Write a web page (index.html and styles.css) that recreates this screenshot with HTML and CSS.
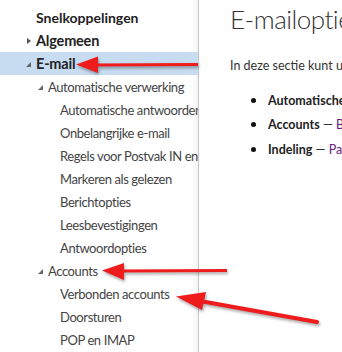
FILE: index.html
```html
<!DOCTYPE html>
<html lang="nl">
<head>
  <meta charset="UTF-8">
  <title>E-mailopties</title>
  <link rel="stylesheet" href="styles.css">
</head>
<body>
  <div class="page">
    <nav class="sidebar">
      <ul class="tree">
        <li class="item top plain">Snelkoppelingen</li>
        <li class="item top"><span class="tri tri-right"></span>Algemeen</li>
        <li class="item top selected"><span class="tri tri-open"></span>E-mail</li>
        <li class="item group"><span class="tri tri-open"></span>Automatische verwerking</li>
        <li class="item leaf">Automatische antwoorden</li>
        <li class="item leaf">Onbelangrijke e-mail</li>
        <li class="item leaf">Regels voor Postvak IN en opruimen</li>
        <li class="item leaf">Markeren als gelezen</li>
        <li class="item leaf">Berichtopties</li>
        <li class="item leaf">Leesbevestigingen</li>
        <li class="item leaf">Antwoordopties</li>
        <li class="item group"><span class="tri tri-open"></span>Accounts</li>
        <li class="item leaf">Verbonden accounts</li>
        <li class="item leaf">Doorsturen</li>
        <li class="item leaf">POP en IMAP</li>
      </ul>
    </nav>

    <main class="content">
      <h1 class="title">E-mailopties</h1>
      <p class="intro">In deze sectie kunt u uw e-mailinstellingen wijzigen.</p>
      <ul class="sections">
        <li><span><b>Automatische verwerking</b> — <span class="link">Berichten automatisch verwerken</span></span></li>
        <li><span><b>Accounts</b> — <span class="link">Beheer uw verbonden accounts</span></span></li>
        <li><span><b>Indeling</b> — <span class="link">Pas de indeling aan</span></span></li>
      </ul>
    </main>

    <!-- rode pijlen uit de schermafbeelding -->
    <svg class="arrows" width="342" height="352" viewBox="0 0 342 352">
      <line x1="95" y1="65" x2="198" y2="64.5" class="shaft"/>
      <polygon points="76,64.5 98,56.5 98,73" class="head"/>

      <line x1="120" y1="271" x2="227" y2="270.5" class="shaft"/>
      <polygon points="102,270.5 124,263 124,280" class="head"/>

      <line x1="200" y1="301" x2="317" y2="322" class="shaft thick"/>
      <polygon points="176,296.5 206,292 202,310" class="head"/>
    </svg>
  </div>
</body>
</html>
```

FILE: styles.css
```css
* {
  box-sizing: border-box;
}

body {
  margin: 0;
  background-color: #ffffff;
  font-family: Lato, "Noto Sans", sans-serif;
  color: #333;
}

.page {
  position: relative;
  display: flex;
  width: 342px;
  height: 352px;
  overflow: hidden;
}

/* zijbalk */
.sidebar {
  width: 199px;
  flex-shrink: 0;
  border-right: 1px solid #c8c8c8;
  box-shadow: inset -6px 0 6px -4px rgba(0,0,0,0.06);
  padding-top: 6px;
  overflow: hidden;
}

.tree {
  list-style: none;
  margin: 0;
  padding: 0;
}

.item {
  display: flex;
  align-items: center;
  height: 23px;
  white-space: nowrap;
  font-size: 13px;
  letter-spacing: -0.4px;
  color: #444;
}

.top {
  padding-left: 26px;
  font-size: 14.5px;
  font-weight: 700;
  letter-spacing: -0.2px;
  color: #222;
}

.plain {
  padding-left: 36px;
  font-size: 14px;
  letter-spacing: 0;
}

.selected {
  background-color: #c7dcf0;
}

.group {
  padding-left: 38px;
}

.leaf {
  padding-left: 60px;
}

.tri {
  display: inline-block;
  width: 0;
  height: 0;
}

.tri-right {
  border-top: 3.5px solid transparent;
  border-bottom: 3.5px solid transparent;
  border-left: 4px solid #555;
  margin-left: 1px;
  margin-right: 5px;
}

.tri-open {
  border-left: 5px solid transparent;
  border-bottom: 5px solid #666;
  margin-top: 2px;
  margin-right: 5px;
}

/* inhoud */
.content {
  padding-left: 31px;
  white-space: nowrap;
}

.title {
  margin: 3px 0 0;
  font-size: 26px;
  font-weight: 300;
  letter-spacing: -0.5px;
  color: #333;
}

.intro {
  margin: 23px 0 0;
  font-size: 12.5px;
  color: #333;
}

.sections {
  list-style: none;
  margin: 15px 0 0;
  padding-left: 21px;
  font-size: 12.5px;
}

.sections li {
  display: flex;
  align-items: center;
  gap: 12px;
  height: 24.5px;
}

.sections li::before {
  content: "";
  width: 5px;
  height: 5px;
  border-radius: 50%;
  background-color: #111;
  flex-shrink: 0;
}

.sections b {
  font-weight: 700;
  color: #222;
}

.link {
  color: #6a1b7a;
}

/* pijlen */
.arrows {
  position: absolute;
  left: 0;
  top: 0;
  pointer-events: none;
  filter: drop-shadow(1px 2px 1.5px rgba(0,0,0,0.35));
}

.shaft {
  stroke: #ee1c1c;
  stroke-width: 3;
}

.thick {
  stroke-width: 4;
  stroke-linecap: round;
}

.head {
  fill: #ee1c1c;
}
```
